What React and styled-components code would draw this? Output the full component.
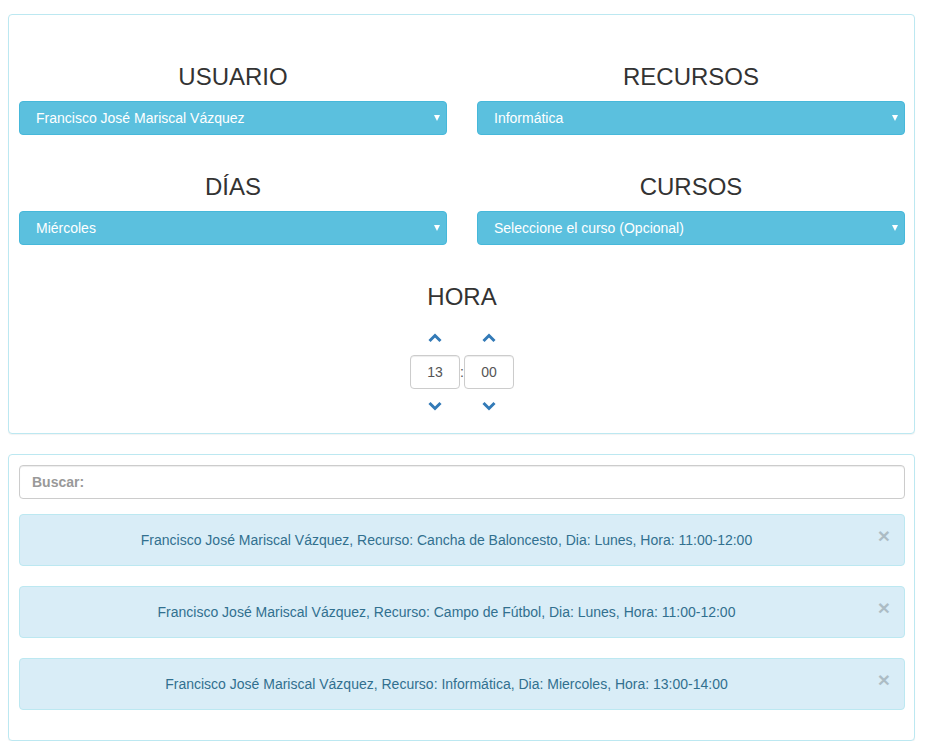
import React, { useState } from 'react';
import styled, { createGlobalStyle } from 'styled-components';

const GlobalStyle = createGlobalStyle`
	body {
		margin: 0;
		background: #fff;
		font-family: 'Liberation Sans', Arial, sans-serif;
		font-size: 14px;
		color: #333;
	}
`;

const reservas = [
	'Francisco José Mariscal Vázquez, Recurso: Cancha de Baloncesto, Dia: Lunes, Hora: 11:00-12:00',
	'Francisco José Mariscal Vázquez, Recurso: Campo de Fútbol, Dia: Lunes, Hora: 11:00-12:00',
	'Francisco José Mariscal Vázquez, Recurso: Informática, Dia: Miercoles, Hora: 13:00-14:00',
];

const Chevron = ({ up }) => (
	<svg width='14' height='10' viewBox='0 0 14 10'>
		<polyline
			points={up ? '1.5,8 7,2.5 12.5,8' : '1.5,2 7,7.5 12.5,2'}
			fill='none'
			stroke='#337ab7'
			strokeWidth='3'
		/>
	</svg>
);

const App = () => {
	const [usuario, setUsuario] = useState('francisco');
	const [recurso, setRecurso] = useState('informatica');
	const [dia, setDia] = useState('miercoles');
	const [curso, setCurso] = useState('');
	const [buscar, setBuscar] = useState('');

	return (
		<Page>
			<GlobalStyle />
			<Panel>
				<FormBody>
					<Field>
						<Heading>USUARIO</Heading>
						<SelectWrap>
							<Select value={usuario} onChange={(e) => setUsuario(e.target.value)}>
								<option value='francisco'>Francisco José Mariscal Vázquez</option>
							</Select>
						</SelectWrap>
					</Field>
					<Field>
						<Heading>RECURSOS</Heading>
						<SelectWrap>
							<Select value={recurso} onChange={(e) => setRecurso(e.target.value)}>
								<option value='informatica'>Informática</option>
								<option value='baloncesto'>Cancha de Baloncesto</option>
								<option value='futbol'>Campo de Fútbol</option>
							</Select>
						</SelectWrap>
					</Field>
					<Field>
						<Heading>DÍAS</Heading>
						<SelectWrap>
							<Select value={dia} onChange={(e) => setDia(e.target.value)}>
								<option value='lunes'>Lunes</option>
								<option value='miercoles'>Miércoles</option>
							</Select>
						</SelectWrap>
					</Field>
					<Field>
						<Heading>CURSOS</Heading>
						<SelectWrap>
							<Select value={curso} onChange={(e) => setCurso(e.target.value)}>
								<option value=''>Seleccione el curso (Opcional)</option>
							</Select>
						</SelectWrap>
					</Field>
					<TimeField>
						<Heading>HORA</Heading>
						<TimePicker>
							<TimeColumn>
								<Arrow><Chevron up /></Arrow>
								<TimeInput defaultValue='13' />
								<Arrow><Chevron /></Arrow>
							</TimeColumn>
							<Separator>:</Separator>
							<TimeColumn>
								<Arrow><Chevron up /></Arrow>
								<TimeInput defaultValue='00' />
								<Arrow><Chevron /></Arrow>
							</TimeColumn>
						</TimePicker>
					</TimeField>
				</FormBody>
			</Panel>
			<Panel>
				<ListBody>
					<Search
						placeholder='Buscar:'
						value={buscar}
						onChange={(e) => setBuscar(e.target.value)}
					/>
					{reservas
						.filter((r) => r.toLowerCase().includes(buscar.toLowerCase()))
						.map((r) => (
							<Alert key={r}>
								{r}
								<Close>×</Close>
							</Alert>
						))}
				</ListBody>
			</Panel>
		</Page>
	);
};

const Page = styled.div`
	padding: 14px 12px 0 8px;
	display: flex;
	flex-direction: column;
	gap: 20px;
`;

const Panel = styled.div`
	border: 1px solid #bce8f1;
	border-radius: 4px;
	background: #fff;
	box-shadow: 0 1px 1px rgba(0, 0, 0, 0.05);
`;

const FormBody = styled.div`
	display: grid;
	grid-template-columns: 1fr 1fr;
	column-gap: 30px;
	row-gap: 39px;
	padding: 49px 9px 10px 10px;
`;

const Field = styled.div`
	display: flex;
	flex-direction: column;
`;

const TimeField = styled(Field)`
	grid-column: 1 / -1;
	align-items: center;
`;

const Heading = styled.h3`
	margin: 0 0 11px;
	font-size: 24px;
	font-weight: 400;
	line-height: 26px;
	text-align: center;
	color: #333;
`;

const SelectWrap = styled.div`
	position: relative;
	&::after {
		content: '';
		position: absolute;
		right: 7px;
		top: 14px;
		border-left: 3.5px solid transparent;
		border-right: 3.5px solid transparent;
		border-top: 6px solid #fff;
		pointer-events: none;
	}
`;

const Select = styled.select`
	appearance: none;
	width: 100%;
	height: 34px;
	padding: 0 24px 0 16px;
	font-family: 'Liberation Sans', Arial, sans-serif;
	font-size: 14px;
	color: #fff;
	background: #5bc0de;
	border: 1px solid #46b8da;
	border-radius: 4px;
	outline: none;
`;

const TimePicker = styled.div`
	display: flex;
	align-items: center;
`;

const TimeColumn = styled.div`
	display: flex;
	flex-direction: column;
	align-items: center;
	width: 50px;
`;

const Arrow = styled.div`
	height: 34px;
	display: flex;
	align-items: center;
	justify-content: center;
	cursor: pointer;
`;

const TimeInput = styled.input`
	box-sizing: border-box;
	width: 50px;
	height: 34px;
	border: 1px solid #ccc;
	border-radius: 4px;
	text-align: center;
	font-family: 'Liberation Sans', Arial, sans-serif;
	font-size: 14px;
	color: #555;
	box-shadow: inset 0 1px 1px rgba(0, 0, 0, 0.075);
`;

const Separator = styled.span`
	width: 4px;
	text-align: center;
	font-size: 14px;
	color: #555;
`;

const ListBody = styled.div`
	display: flex;
	flex-direction: column;
	padding: 10px 9px 10px 10px;
`;

const Search = styled.input`
	box-sizing: border-box;
	height: 34px;
	margin-bottom: 15px;
	padding: 0 12px;
	border: 1px solid #ccc;
	border-radius: 4px;
	font-family: 'Liberation Sans', Arial, sans-serif;
	font-size: 14px;
	color: #555;
	box-shadow: inset 0 1px 1px rgba(0, 0, 0, 0.075);
	&::placeholder {
		color: #999;
		font-weight: 700;
	}
`;

const Alert = styled.div`
	position: relative;
	margin-bottom: 20px;
	padding: 15px 46px 15px 15px;
	line-height: 20px;
	text-align: center;
	color: #31708f;
	background: #d9edf7;
	border: 1px solid #bce8f1;
	border-radius: 4px;
`;

const Close = styled.span`
	position: absolute;
	right: 14px;
	top: 10px;
	font-size: 21px;
	font-weight: 700;
	line-height: 1;
	color: #000;
	opacity: 0.2;
	cursor: pointer;
`;

export default App;
